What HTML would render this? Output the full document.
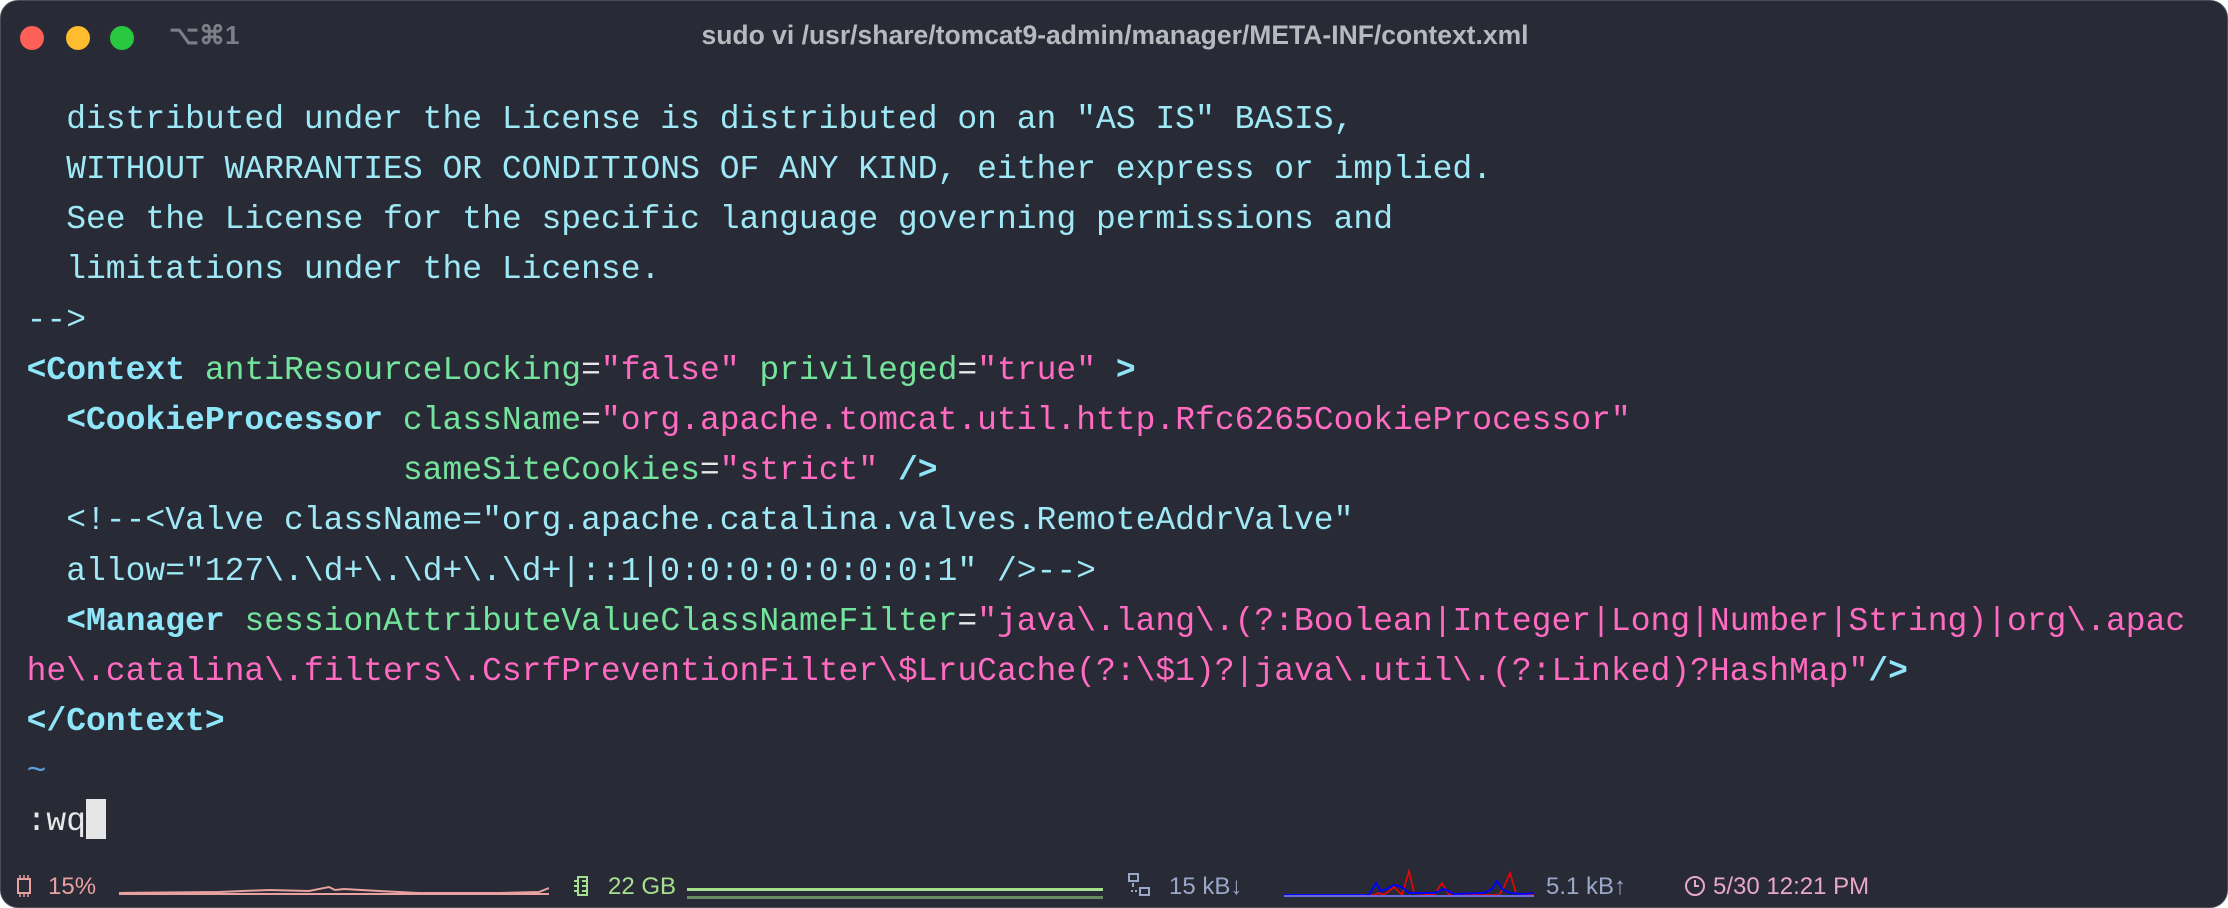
<!DOCTYPE html>
<html><head><meta charset="utf-8"><style>
html,body{margin:0;padding:0;background:#fff;}
body{width:2228px;height:908px;overflow:hidden;position:relative;}
.win{position:absolute;left:0;top:0;width:2226px;height:906px;background:#282a36;border:1px solid #4a4c58;border-radius:18px;overflow:hidden;}
.tl{position:absolute;top:25px;width:24px;height:24px;border-radius:50%;}
.title{position:absolute;top:19px;left:0;width:2228px;text-align:center;font:bold 26.5px "Liberation Sans",sans-serif;color:#b8b9be;}
.sc{position:absolute;left:168px;top:19px;font:bold 26px "Liberation Sans",sans-serif;color:#7d7f88;}
.ln{position:absolute;left:25.6px;font-family:"Liberation Mono","DejaVu Sans Mono",monospace;font-size:33px;line-height:50px;white-space:pre;color:#9ee9f5;}
.c{color:#9ee9f5}.t{color:#8fe6f8;font-weight:bold}.a{color:#74e39c}.s{color:#ff6bc1}.w{color:#e8e8ea}
.sb{position:absolute;top:872px;font:24px "Liberation Sans",sans-serif;}
</style></head><body>
<div class="win">
<div class="tl" style="left:19px;background:#fe5f57"></div>
<div class="tl" style="left:65px;background:#febc2e"></div>
<div class="tl" style="left:109px;background:#28c840"></div>
<div class="sc">⌥⌘1</div>
<div class="title">sudo vi /usr/share/tomcat9-admin/manager/META-INF/context.xml</div>

<div class="ln" style="top:94px">  distributed under the License is distributed on an "AS IS" BASIS,</div>
<div class="ln" style="top:144px">  WITHOUT WARRANTIES OR CONDITIONS OF ANY KIND, either express or implied.</div>
<div class="ln" style="top:194px">  See the License for the specific language governing permissions and</div>
<div class="ln" style="top:244px">  limitations under the License.</div>
<div class="ln" style="top:295px">--&gt;</div>
<div class="ln" style="top:345px"><span class="t">&lt;Context</span> <span class="a">antiResourceLocking</span><span class="w">=</span><span class="s">"false"</span> <span class="a">privileged</span><span class="w">=</span><span class="s">"true"</span> <span class="t">&gt;</span></div>
<div class="ln" style="top:395px">  <span class="t">&lt;CookieProcessor</span> <span class="a">className</span><span class="w">=</span><span class="s">"org.apache.tomcat.util.http.Rfc6265CookieProcessor"</span></div>
<div class="ln" style="top:445px">                   <span class="a">sameSiteCookies</span><span class="w">=</span><span class="s">"strict"</span> <span class="t">/&gt;</span></div>
<div class="ln" style="top:495px">  &lt;!--&lt;Valve className="org.apache.catalina.valves.RemoteAddrValve"</div>
<div class="ln" style="top:546px">  allow="127\.\d+\.\d+\.\d+|::1|0:0:0:0:0:0:0:1" /&gt;--&gt;</div>
<div class="ln" style="top:596px">  <span class="t">&lt;Manager</span> <span class="a">sessionAttributeValueClassNameFilter</span><span class="w">=</span><span class="s">"java\.lang\.(?:Boolean|Integer|Long|Number|String)|org\.apac</span></div>
<div class="ln" style="top:646px"><span class="s">he\.catalina\.filters\.CsrfPreventionFilter\$LruCache(?:\$1)?|java\.util\.(?:Linked)?HashMap"</span><span class="t">/&gt;</span></div>
<div class="ln" style="top:696px"><span class="t">&lt;/Context&gt;</span></div>
<div class="ln" style="top:746px;color:#5aa0e0">~</div>
<div class="ln w" style="top:796px">:wq<span style="display:inline-block;width:20px;height:40px;background:#e6e6e6;vertical-align:-9px"></span></div>

<svg style="position:absolute;left:14px;top:874px" width="18" height="22" viewBox="0 0 18 22"><rect x="3" y="4" width="12" height="14" fill="none" stroke="#e8a0a0" stroke-width="2"/><g stroke="#e8a0a0" stroke-width="1.5"><path d="M5 0v4M9 0v4M13 0v4M5 18v4M9 18v4M13 18v4"/></g></svg>
<div class="sb" style="left:47px;color:#e8a0a0">15%</div>
<svg style="position:absolute;left:118px;top:880px" width="430" height="16"><polyline points="0,12 100,11 150,9 190,10 210,6 216,9 225,8 260,10 300,12 380,12 420,11 430,7" fill="none" stroke="#e8a0a0" stroke-width="2"/><line x1="0" y1="13" x2="430" y2="13" stroke="#e8a0a0" stroke-width="2"/></svg>
<svg style="position:absolute;left:573px;top:874px" width="16" height="22"><rect x="4" y="2" width="9" height="18" fill="none" stroke="#a6e08e" stroke-width="2"/><path d="M0 6h4M0 11h4M0 16h4M8 6h5M8 11h5M8 16h5" stroke="#a6e08e" stroke-width="2"/></svg>
<div class="sb" style="left:607px;color:#a6e08e">22 GB</div>
<div style="position:absolute;left:686px;top:887px;width:416px;height:3px;background:#a6e08e"></div>
<div style="position:absolute;left:686px;top:895px;width:416px;height:3px;background:#6a8a60"></div>
<svg style="position:absolute;left:1127px;top:872px" width="24" height="26"><rect x="1" y="1" width="9" height="7" fill="none" stroke="#9aa8c8" stroke-width="2"/><rect x="12" y="15" width="9" height="7" fill="none" stroke="#9aa8c8" stroke-width="2"/><path d="M5 10v4M3 18h2M7 18h2" stroke="#9aa8c8" stroke-width="2"/></svg>
<div class="sb" style="left:1168px;color:#9aa8c8">15 kB↓</div>
<svg style="position:absolute;left:1283px;top:866px" width="250" height="32"><polyline points="0,28 90,28 95,26 100,28 110,20 118,28 125,4 130,26 150,28 158,16 165,28 200,28 215,28 220,20 226,6 232,26 240,28 250,28" fill="none" stroke="#f00" stroke-width="1.5"/><polyline points="0,28 85,28 92,16 97,24 103,22 110,18 118,20 125,26 150,26 160,22 170,27 200,26 208,22 213,14 218,22 226,26 240,27 250,26" fill="none" stroke="#00f" stroke-width="2"/><line x1="0" y1="29" x2="250" y2="29" stroke="#6a6ad8" stroke-width="2"/></svg>
<div class="sb" style="left:1545px;color:#9aa8c8">5.1 kB↑</div>
<svg style="position:absolute;left:1683px;top:874px" width="22" height="22"><circle cx="11" cy="11" r="9" fill="none" stroke="#e8a8c8" stroke-width="2"/><path d="M11 5v6h4" fill="none" stroke="#e8a8c8" stroke-width="2"/></svg>
<div class="sb" style="left:1712px;color:#e8a8c8">5/30 12:21 PM</div>
</div>
</body></html>
